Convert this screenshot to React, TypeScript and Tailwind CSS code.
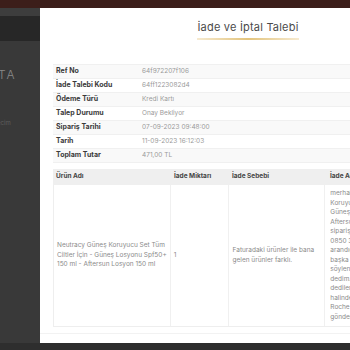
export default function App() {
  const info: [string, string][] = [
    ["Ref No", "64f972207f106"],
    ["İade Talebi Kodu", "64ff1223082d4"],
    ["Ödeme Türü", "Kredi Kartı"],
    ["Talep Durumu", "Onay Bekliyor"],
    ["Sipariş Tarihi", "07-09-2023 09:48:00"],
    ["Tarih", "11-09-2023 16:12:03"],
    ["Toplam Tutar", "471,00 TL"],
  ];
  const desc = [
    "merhaba Neutracy Güneş",
    "Koruyucu Set Tüm Ciltler İçin -",
    "Güneş Losyonu Spf50+ 150 ml -",
    "Aftersun Losyon 150 ml",
    "siparişimde farklı ürün geldi.",
    "0850 333 00 00 numaralı hattı",
    "arandığımda ürünün",
    "başka bir ürün olduğu",
    "söylendi. İade etmek istiyorum",
    "dedim. Ürünü iade etmeniz",
    "dediler. Ürün iade edilmesi",
    "halinde aynı ürünü La",
    "Roche Posay olarak",
    "gönderebiliriz.",
  ];
  return (
    <div
      className="relative w-[350px] h-[350px] overflow-hidden bg-[#3a3a3a]"
      style={{ fontFamily: "Inter, 'Noto Sans', sans-serif" }}
    >
      {/* background page */}
      <div className="flex flex-col h-full">
        <div className="h-[8px] bg-[#3c1e1a]" />
        <div className="h-[8px] bg-[#3d3d3d]" />
        <div className="h-[25px] bg-[#272727]" />
        <div className="flex-1 bg-[#393939] flex flex-col">
          <div className="mt-[28px] text-[12px] leading-[12px] text-[#8a8a8a] tracking-[2px] -ml-[2px] font-light">TA</div>
          <div className="mt-[38px] text-[6px] leading-[8px] text-[#5e5e5e] -ml-[3px]">ecim</div>
        </div>
        <div className="h-[7px] bg-[#2e2e2e]" />
      </div>

      {/* modal */}
      <div className="absolute left-[40px] top-[8px] w-[416px] h-[335px] bg-white flex flex-col">
        <div className="flex justify-center pt-[12px]">
          <div className="flex flex-col">
            <div className="text-[11px] leading-[14px] text-[#4a4a4a] tracking-[0.2px]">İade ve İptal Talebi</div>
            <div className="mt-[4px] h-[2px] bg-gradient-to-r from-[#f6ead0] via-[#e3c47c] to-[#f6ead0]" />
          </div>
        </div>

        <div className="mx-[13px] mt-[24px] flex flex-col border-b border-[#f0f0f0]">
          {info.map(([k, v], i) => (
            <div
              key={k}
              className={`flex h-[14px] items-center border-t border-[#f0f0f0] ${i % 2 === 0 ? "bg-[#f9f9f9]" : "bg-white"}`}
            >
              <div className="w-[86px] pl-[3px] text-[7px] font-bold text-[#3a3a3a]">{k}</div>
              <div className="pl-[3px] text-[6.5px] text-[#9a9a9a]">{v}</div>
            </div>
          ))}
        </div>

        <div className="mx-[13px] mt-[6px] flex flex-col">
          <div className="flex h-[16px] items-center bg-[#efefef] text-[6.5px] font-bold text-[#444]">
            <div className="w-[117px] pl-[3px]">Ürün Adı</div>
            <div className="w-[58px] pl-[4px]">İade Miktarı</div>
            <div className="w-[97px] pl-[4px]">İade Sebebi</div>
            <div className="w-[118px] pl-[5px]">İade Açıklaması</div>
          </div>
          <div className="flex text-[6.5px] leading-[9.5px] text-[#8a8a8a] border-b border-l border-[#eeeeee]">
            <div className="w-[117px] pl-[3px] pr-[3px] flex items-center border-r border-[#f0f0f0]">
              <div>
                Neutracy Güneş Koruyucu Set Tüm Ciltler İçin - Güneş Losyonu Spf50+ 150 ml - Aftersun Losyon 150 ml
              </div>
            </div>
            <div className="w-[58px] pl-[3px] flex items-center border-r border-[#f0f0f0]">1</div>
            <div className="w-[97px] pl-[4px] pr-[4px] flex items-center border-r border-[#f0f0f0]">
              <div>Faturadaki ürünler ile bana gelen ürünler farklı.</div>
            </div>
            <div className="w-[118px] pl-[5px] py-[4px] whitespace-nowrap">
              {desc.map((l) => (
                <div key={l}>{l}</div>
              ))}
            </div>
          </div>
        </div>
        <div className="mt-[6px] border-t border-[#f2f2f2]" />
      </div>
    </div>
  );
}
